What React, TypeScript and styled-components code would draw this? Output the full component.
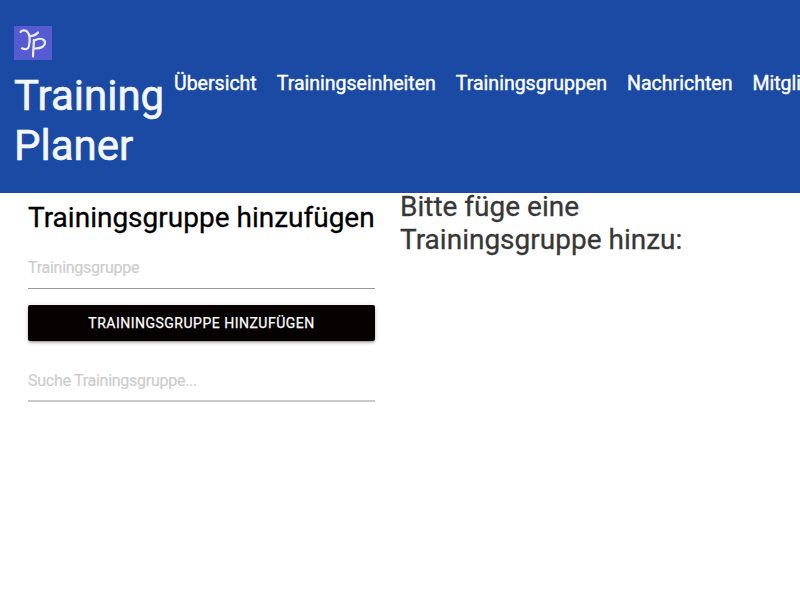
import React from "react";
import styled, { createGlobalStyle } from "styled-components";

const GlobalStyle = createGlobalStyle`
  * { box-sizing: border-box; }
  html, body { margin: 0; padding: 0; overflow: hidden; background: #fff; font-family: Roboto, sans-serif; }
`;

const Page = styled.div`
  width: 100vw;
  height: 100vh;
  overflow: hidden;
`;

const Header = styled.header`
  display: flex;
  align-items: flex-start;
  height: 193px;
  padding: 26px 0 0 14px;
  background: #1b4aa4;
  color: #fff;
  overflow: hidden;
`;

const Brand = styled.a`
  display: flex;
  flex-direction: column;
  flex: none;
  width: 150px;
  font-size: 42px;
  line-height: 50.4px;
  color: #f4f7fd;
  -webkit-text-stroke: 0.6px currentColor;
`;

const Logo = styled.svg`
  display: block;
  width: 38px;
  height: 34px;
  margin-bottom: 11px;
`;

const Nav = styled.nav`
  display: flex;
  flex: none;
  gap: 20px;
  margin: 46px 0 0 10px;
`;

const NavLink = styled.a`
  font-size: 19.53px;
  line-height: 24px;
  font-weight: 400;
  -webkit-text-stroke: 0.4px currentColor;
  white-space: nowrap;
`;

const Main = styled.main`
  display: grid;
  grid-template-columns: 400px 400px;
`;

const Sidebar = styled.section`
  display: flex;
  flex-direction: column;
  padding: 8px 25px 0 28px;
`;

const FormTitle = styled.h2`
  margin: 0 0 14px;
  font-size: 28px;
  line-height: 33px;
  font-weight: 400;
  white-space: nowrap;
  color: #000;
  -webkit-text-stroke: 0.3px currentColor;
`;

const Field = styled.input<{ $thick?: boolean }>`
  width: 347px;
  height: 41px;
  padding: ${(p) => (p.$thick ? "1px 0 0" : "0 0 2px")};
  border: 0;
  border-bottom: ${(p) => (p.$thick ? "2px solid #cacaca" : "1px solid #9a9a9a")};
  outline: 0;
  background: transparent;
  font: 400 16px Roboto, sans-serif;
  letter-spacing: -0.27px;
  &::placeholder { color: #cdcdcd; opacity: 1; -webkit-text-stroke: 0.2px currentColor; }
`;

const SubmitButton = styled.button`
  width: 347px;
  height: 36px;
  margin: 16.4px 0 19.6px;
  padding: 0;
  border: 0;
  border-radius: 2px;
  background: #060202;
  color: #fff;
  font: 400 14px Roboto, sans-serif;
  -webkit-text-stroke: 0.25px currentColor;
  letter-spacing: 0.5px;
  text-transform: uppercase;
  box-shadow: 0 2px 2px rgba(0, 0, 0, 0.14), 0 3px 1px -2px rgba(0, 0, 0, 0.12), 0 1px 5px rgba(0, 0, 0, 0.2);
`;

const Message = styled.h3`
  width: 300px;
  margin: -3px 0 0;
  font-size: 28px;
  line-height: 33px;
  font-weight: 400;
  color: #373737;
  -webkit-text-stroke: 0.3px currentColor;
`;

const links = ["Übersicht", "Trainingseinheiten", "Trainingsgruppen", "Nachrichten", "Mitglieder"];

export default function App() {
  return (
    <Page>
      <GlobalStyle />
      <Header>
        <Brand>
          <Logo viewBox="0 0 38 34" fill="none">
            <rect width="38" height="34" fill="#565bd2" />
            <path d="M6.5 6C7.5 3.8 11.5 3.8 13 5.5C14 6.7 15 8 15.5 10C16 14 15.5 18 14.8 20.5C14 23.5 10.5 23.7 8 22.3M15.5 10C18 10 22 9 24 6.5M19.8 14C20 19 19 25 19 30.5M20 15C22 13 26 12.2 28.5 13.2C32 14.7 31.5 18.5 29 20.5C26.5 22.2 22 22.5 20 22.5" stroke="#ececff" strokeWidth="2.2" strokeLinecap="round" strokeLinejoin="round" />
          </Logo>
          Training Planer
        </Brand>
        <Nav>{links.map((l) => <NavLink key={l}>{l}</NavLink>)}</Nav>
      </Header>
      <Main>
        <Sidebar>
          <FormTitle>Trainingsgruppe hinzufügen</FormTitle>
          <Field placeholder="Trainingsgruppe" />
          <SubmitButton>Trainingsgruppe hinzufügen</SubmitButton>
          <Field $thick placeholder="Suche Trainingsgruppe..." />
        </Sidebar>
        <Message>Bitte füge eine Trainingsgruppe hinzu:</Message>
      </Main>
    </Page>
  );
}
